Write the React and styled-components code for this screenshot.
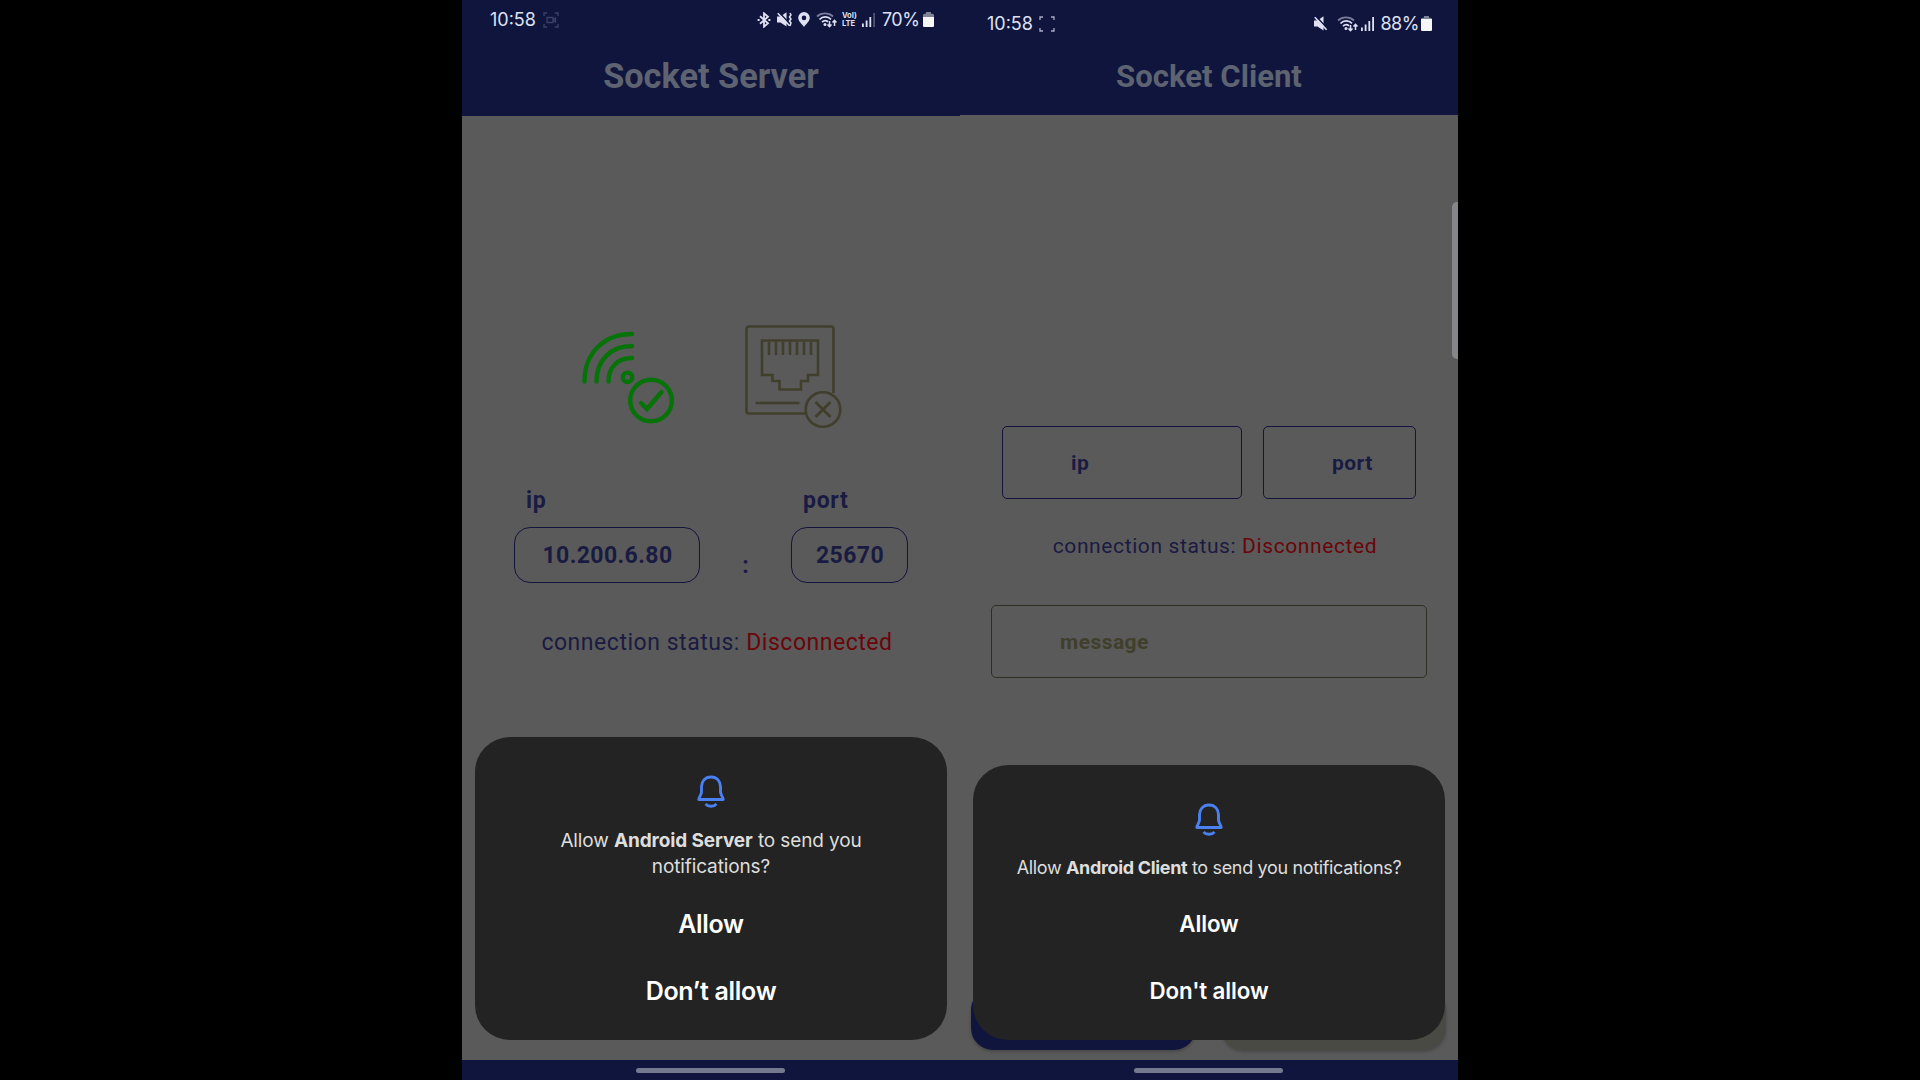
import React from 'react';
import styled, { createGlobalStyle } from 'styled-components';

const c = {
  navy: '#10153e',
  surface: '#5a5a5a',
  ink: '#1a1b42',
  red: '#6a0509',
  green: '#057307',
  olive: '#403f2c',
  sheet: '#232324',
  status: '#dfe1f3',
  title: '#5d6370',
  blue: '#4a80f0',
};

const Global = createGlobalStyle`
  * { box-sizing: border-box; }
  body { margin: 0; background: #000; font-family: Roboto, "Liberation Sans", sans-serif; }
`;

const Stage = styled.div`
  width: 1920px;
  height: 1080px;
  display: flex;
  padding-left: 462px;
  background: #000;
  overflow: hidden;
`;

const Phone = styled.section`
  position: relative;
  width: 498px;
  height: 1080px;
  display: flex;
  flex-direction: column;
  background: ${c.surface};
  overflow: hidden;
`;

const Header = styled.header`
  flex: none;
  height: ${p => p.$height}px;
  background: ${c.navy};
  display: flex;
  flex-direction: column;
`;

const StatusBar = styled.div`
  height: 48px;
  flex: none;
  padding: ${p => p.$top}px ${p => p.$right}px 0 ${p => p.$left}px;
  display: flex;
  justify-content: space-between;
  align-items: flex-start;
  color: ${c.status};
  font: 400 18px/22px Inter, sans-serif;
`;

const Cluster = styled.div`
  display: flex;
  align-items: center;
  height: 22px;
  gap: ${p => p.$gap || 0}px;
  svg { flex: none; display: block; }
`;

const Percent = styled.span`
  letter-spacing: -0.45px;
  margin: 0 ${p => p.$after}px 0 ${p => p.$before}px;
`;

const Title = styled.h1`
  margin: ${p => p.$top}px 0 0;
  text-align: center;
  color: ${c.title};
  font-size: ${p => p.$size}px;
  font-weight: 700;
  line-height: 40px;
`;

const Content = styled.main`
  flex: 1;
  display: flex;
  flex-direction: column;
  padding: ${p => p.$pad};
`;

const IconRow = styled.div`
  display: flex;
  gap: 67px;
  height: 110px;
  padding-left: 116px;
  svg { display: block; }
`;

const AddressRow = styled.div`
  display: flex;
  margin-top: 52px;
  padding-left: 52px;
`;

const AddressField = styled.div`
  width: ${p => p.$width}px;
`;

const Label = styled.label`
  display: block;
  height: 40px;
  padding-left: 12px;
  color: ${c.ink};
  font-size: 23px;
  font-weight: 700;
  line-height: 28px;
  letter-spacing: 0.7px;
`;

const Pill = styled.div`
  height: 56px;
  border: 1px solid #14143c;
  border-radius: 16px;
  display: flex;
  align-items: center;
  justify-content: center;
  padding-left: 1px;
  color: ${c.ink};
  font-size: 23px;
  font-weight: 700;
  letter-spacing: 0.4px;
`;

const Colon = styled.div`
  width: 91px;
  padding-top: 65px;
  text-align: center;
  color: ${c.ink};
  font-size: 23px;
  line-height: 28px;
  font-weight: 700;
`;

const Status = styled.p`
  margin: ${p => p.$top}px 0 0;
  padding-left: 12px;
  text-align: center;
  white-space: nowrap;
  color: ${c.ink};
  font-size: ${p => p.$size}px;
  line-height: 28px;
  letter-spacing: ${p => p.$track}px;
  span { color: ${c.red}; }
`;

const FieldRow = styled.div`
  display: flex;
  gap: 21px;
  padding-left: 11px;
`;

const Field = styled.div`
  flex: none;
  width: ${p => p.$width};
  height: 73px;
  margin-top: ${p => p.$top || 0}px;
  padding-left: 68px;
  border: 1px solid ${p => p.$line || '#14143c'};
  border-radius: 5px;
  display: flex;
  align-items: center;
  color: ${p => p.$color || c.ink};
  font-size: 21px;
  font-weight: 700;
  letter-spacing: 0.45px;
`;

const Actions = styled.div`
  display: flex;
  justify-content: space-between;
  margin: auto -19px 10px -20px;
`;

const Action = styled.div`
  width: 225px;
  height: 62px;
  border-radius: 22px;
  background: ${p => p.$tone};
  box-shadow: 0 2px 3px rgba(40, 40, 40, 0.35);
`;

const NavBar = styled.footer`
  flex: none;
  height: 20px;
  background: ${c.navy};
  display: flex;
  justify-content: center;
  padding: 7.5px 1px 0 0;
`;

const Handle = styled.div`
  width: 149px;
  height: 5.5px;
  border-radius: 3px;
  background: #747990;
`;

const Scroller = styled.div`
  position: absolute;
  right: 0;
  top: 202px;
  width: 6px;
  height: 157px;
  border-radius: 5px 0 0 5px;
  background: #85858a;
`;

const Sheet = styled.div`
  position: absolute;
  left: 13px;
  bottom: 40px;
  width: 472px;
  height: ${p => p.$height}px;
  border-radius: 35px;
  background: ${c.sheet};
  display: flex;
  flex-direction: column;
  align-items: center;
  padding-top: 36px;
  font-family: Inter, sans-serif;
  svg { display: block; flex: none; }
`;

const Prompt = styled.p`
  margin: ${p => p.$top}px 0 0;
  text-align: center;
  color: #dededc;
  font-size: ${p => p.$size}px;
  line-height: 26.4px;
  letter-spacing: ${p => p.$track}px;
  b { font-weight: 700; }
`;

const Choice = styled.button`
  margin: ${p => p.$top}px 0 0;
  padding: 0;
  border: 0;
  background: none;
  color: #fff;
  font: 600 ${p => p.$size}px/36px Inter, sans-serif;
  letter-spacing: ${p => p.$track}px;
`;

const VolteMark = styled.span`
  display: flex;
  flex-direction: column;
  width: 15px;
  font: 700 7.6px/7.4px Inter, sans-serif;
  white-space: nowrap;
`;

const Bluetooth = () => (
  <svg width="14" height="16" viewBox="0 0 14 16" fill="none" stroke="currentColor" strokeWidth="1.8">
    <path d="M3 4.3l8 7-4 3.4V1.3l4 3.4-8 7" />
    <path d="M.6 8h2M11.4 8h2" strokeWidth="2" />
  </svg>
);

const Muted = ({ vibrate }) => (
  <svg width="15" height="15" viewBox="0 0 15 15">
    <path d="M0 4.500h3.500L9.500.2v14.300L3.500 10.500H0z" fill="currentColor" />
    <path d="M2 .2l12 13" stroke={c.navy} strokeWidth="1.500" />
    <path d="M.8 1.200l11.800 12.500" stroke="currentColor" strokeWidth="1.600" />
    {vibrate && <path d="M13 1l1 2-1.500 2L14 7l-1.500 2 1.500 2-1 3" stroke="currentColor" strokeWidth="1.500" fill="none" />}
  </svg>
);

const Pin = () => (
  <svg width="12" height="15" viewBox="0 0 12 15">
    <path fillRule="evenodd" fill="currentColor" d="M6 0a5.8 5.8 0 0 1 5.8 5.8C11.800 9.500 8 12 6 15 4 12 .2 9.500.2 5.800A5.800 5.800 0 0 1 6 0zm0 3.600a2.300 2.300 0 1 0 0 4.600 2.300 2.300 0 0 0 0-4.600z" />
  </svg>
);

const Wifi = () => (
  <svg width="21" height="16" viewBox="0 0 21 16" fill="none" stroke="currentColor" strokeWidth="1.7">
    <path d="M1 4.500a12 12 0 0 1 16 0" opacity=".5" />
    <path d="M3.500 7.500a8 8 0 0 1 11.500-.2M6 10.200a4.600 4.600 0 0 1 6-.5" />
    <circle cx="9" cy="12.500" r="1.500" fill="currentColor" stroke="none" />
    <path d="M13.500 9v5.500m-2-2l2 2.200 2-2.200M18.500 14V8.500m-2 2l2-2.200 2 2.200" strokeWidth="1.500" />
  </svg>
);

const Bars = ({ weak }) => (
  <svg width="14" height="14" viewBox="0 0 14 14" fill="currentColor">
    <rect x="0" y="10.500" width="1.800" height="3.500" />
    <rect x="3.700" y="7.500" width="1.800" height="6.500" />
    <rect x="7.400" y="4" width="1.800" height="10" />
    <rect x="11.200" y="0" width="1.800" height="14" opacity={weak ? 0.3 : 1} />
  </svg>
);

const Battery = ({ level }) => (
  <svg width="11" height="15" viewBox="0 0 11 15">
    <path d="M3 0h5v1.800h1.500A1.500 1.500 0 0 1 11 3.300v10.200a1.500 1.500 0 0 1-1.500 1.500h-8A1.500 1.500 0 0 1 0 13.500V3.300a1.500 1.500 0 0 1 1.500-1.500H3z" fill="#7f8397" />
    <path d={`M0 ${15 - level}h11V13.500a1.500 1.500 0 0 1-1.500 1.500h-8A1.500 1.500 0 0 1 0 13.500z`} fill="#f6f6f6" />
  </svg>
);

const Capture = ({ dim }) => (
  <svg width="16" height="16" viewBox="0 0 16 16" fill="none" stroke={dim ? '#39426a' : '#a9adc6'} strokeWidth="1.300">
    <path d="M1 4V1h3M12 1h3v3M15 12v3h-3M4 15H1v-3" />
    {dim && <path d="M4 5.500h6v5H4zM10 8l2.500-2v4z" />}
  </svg>
);

const WifiOk = () => (
  <svg width="98" height="99" viewBox="0 -3 98 99" fill="none" stroke={c.green} strokeWidth="4.400">
    <path d="M6.500 53.500C6.500 25 26 6 54 6M18.500 53.500C18.500 32 33 18 54 18M30.500 53.500c0-14 9-23.500 23.500-23.500" strokeLinecap="round" />
    <circle cx="49.500" cy="49.300" r="4.700" />
    <circle cx="73" cy="72.500" r="20.800" />
    <path d="M63 75l6 6L83.500 64" strokeWidth="4.400" strokeLinecap="round" />
  </svg>
);

const EthernetOff = () => (
  <svg width="100" height="106" viewBox="0 0 100 106" fill="none" stroke={c.olive} strokeWidth="2.600">
    <path d="M62.500 88.500H6a2.500 2.500 0 0 1-2.500-2.500V4A2.500 2.500 0 0 1 6 1.500h82A2.500 2.500 0 0 1 90.500 4v64" />
    <path d="M19 15.500h56V50H65v6h-7v8.500H36.500V56h-7v-6H19z" />
    <path d="M26 17v13M33 17v13M40 17v13M47 17v13M54 17v13M61 17v13M68 17v13" />
    <path d="M12.500 78h44" />
    <circle cx="80" cy="84.500" r="17.300" />
    <path d="M72.500 77l15 15M87.500 77l-15 15" strokeWidth="2.800" />
  </svg>
);

const Bell = () => (
  <svg width="30" height="36" viewBox="0 0 30 36" fill="none" stroke={c.blue} strokeWidth="2.900" strokeLinejoin="round">
    <path d="M15 4C9 4 5.500 8.500 5.500 13.500v5.500c0 2.500-2.700 5.500-2.700 7.500h24.400c0-2-2.700-5-2.700-7.500v-5.500C24.500 8.500 21 4 15 4z" />
    <path d="M9.500 31c1.500 1.600 3.300 2.300 5.500 2.300s4-.7 5.500-2.300" />
  </svg>
);

const ConnectionStatus = props => (
  <Status {...props}>connection status: <span>Disconnected</span></Status>
);

function ServerPhone() {
  return (
    <Phone>
      <Header $height={116}>
        <StatusBar $top={8.6} $left={28} $right={26.5}>
          <Cluster $gap={7}>10:58 <Capture dim /></Cluster>
          <Cluster>
            <Cluster $gap={6}>
              <Bluetooth /><Muted vibrate /><Pin /><Wifi />
            </Cluster>
            <Cluster $gap={5}>
              <span />
              <VolteMark><span>VoI)</span><span>LTE</span></VolteMark>
              <Bars weak />
            </Cluster>
            <Percent $before={6} $after={3}>70%</Percent>
            <Battery level={10} />
          </Cluster>
        </StatusBar>
        <Title $top={8} $size={34.3}>Socket Server</Title>
      </Header>
      <Content $pad="209px 0 0">
        <IconRow><WifiOk /><EthernetOff /></IconRow>
        <AddressRow>
          <AddressField $width={186}>
            <Label>ip</Label>
            <Pill>10.200.6.80</Pill>
          </AddressField>
          <Colon>:</Colon>
          <AddressField $width={117}>
            <Label>port</Label>
            <Pill>25670</Pill>
          </AddressField>
        </AddressRow>
        <ConnectionStatus $top={46} $size={23} $track={0.53} />
      </Content>
      <NavBar><Handle /></NavBar>
      <Sheet $height={303}>
        <Bell />
        <Prompt $top={19} $size={19} $track={-0.12}>
          Allow <b>Android Server</b> to send you<br />notifications?
        </Prompt>
        <Choice $top={25} $size={25} $track={-0.3}>Allow</Choice>
        <Choice $top={31} $size={25} $track={-0.3}>Don’t allow</Choice>
      </Sheet>
    </Phone>
  );
}

function ClientPhone() {
  return (
    <Phone>
      <Header $height={115}>
        <StatusBar $top={12.5} $left={27} $right={26}>
          <Cluster $gap={6}>10:58 <Capture /></Cluster>
          <Cluster>
            <Cluster $gap={8}><Muted /><Wifi /></Cluster>
            <Cluster $gap={3}><span /><Bars /></Cluster>
            <Percent $before={5} $after={2}>88%</Percent>
            <Battery level={12} />
          </Cluster>
        </StatusBar>
        <Title $top={9} $size={31.1}>Socket Client</Title>
      </Header>
      <Content $pad="311px 31px 0">
        <FieldRow>
          <Field $width="240px">ip</Field>
          <Field $width="153px">port</Field>
        </FieldRow>
        <ConnectionStatus $top={33} $size={21} $track={0.61} />
        <Field $width="436px" $top={45} $color={c.olive} $line="#2e2e22">message</Field>
        <Actions>
          <Action $tone={c.navy} />
          <Action $tone="#4a4a45" />
        </Actions>
      </Content>
      <NavBar><Handle /></NavBar>
      <Scroller />
      <Sheet $height={275}>
        <Bell />
        <Prompt $top={17.5} $size={18} $track={-0.34}>
          Allow <b>Android Client</b> to send you notifications?
        </Prompt>
        <Choice $top={25.5} $size={22.3} $track={-0.1}>Allow</Choice>
        <Choice $top={31} $size={22.3} $track={-0.1}>Don't allow</Choice>
      </Sheet>
    </Phone>
  );
}

export default function App() {
  return (
    <>
      <Global />
      <Stage>
        <ServerPhone />
        <ClientPhone />
      </Stage>
    </>
  );
}
